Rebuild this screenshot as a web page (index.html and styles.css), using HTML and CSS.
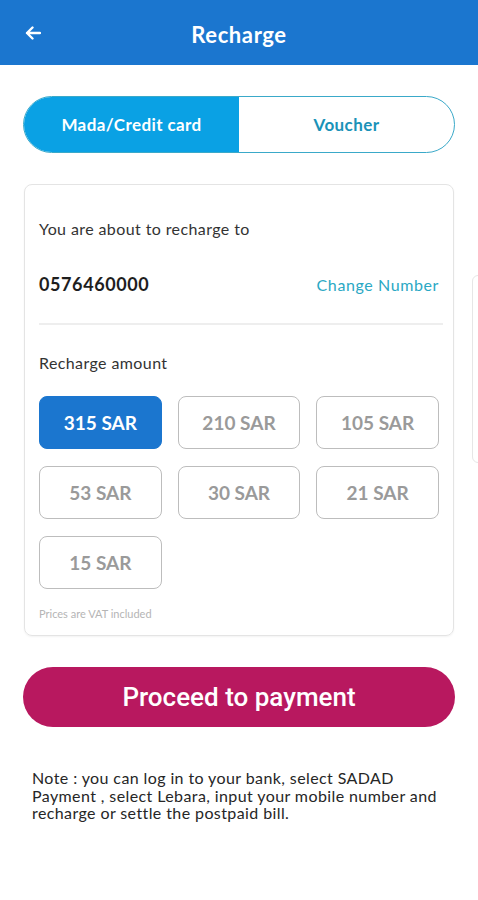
FILE: index.html
```html
<!DOCTYPE html>
<html lang="en">
  <head>
    <meta charset="UTF-8" />
    <meta name="viewport" content="width=device-width, initial-scale=1.0" />
    <title>Recharge</title>
    <link rel="stylesheet" href="styles.css">
  </head>
  <body>
    <header class="topbar">
      <span class="back">
        <svg width="16" height="14" viewBox="0 0 16 14">
          <path d="M15 7H2M7.5 1.5L2 7l5.5 5.5" fill="none" stroke="#fff" stroke-width="2.4" stroke-linecap="round" stroke-linejoin="round" />
        </svg>
      </span>
      <h1 class="title">Recharge</h1>
    </header>

    <main class="content">
      <div class="tabs">
        <div class="tab active">Mada/Credit card</div>
        <div class="tab">Voucher</div>
      </div>

      <div class="card">
        <p class="label">You are about to recharge to</p>
        <div class="number-row">
          <span class="number">0576460000</span>
          <span class="change">Change Number</span>
        </div>
        <div class="divider"></div>
        <p class="label amount-label">Recharge amount</p>
        <div class="amounts">
          <div class="amount selected">315 SAR</div>
          <div class="amount">210 SAR</div>
          <div class="amount">105 SAR</div>
          <div class="amount">53 SAR</div>
          <div class="amount">30 SAR</div>
          <div class="amount">21 SAR</div>
          <div class="amount">15 SAR</div>
        </div>
        <p class="vat">Prices are VAT included</p>
      </div>
      <!-- edge of the next card, cut off by the screen -->
      <div class="peek"></div>

      <button type="button" class="proceed">Proceed to payment</button>

      <p class="note">
        Note : you can log in to your bank, select SADAD Payment , select Lebara, input your mobile number and recharge or settle the postpaid bill.
      </p>
    </main>
  </body>
</html>
```

FILE: styles.css
```css
body {
  margin: 0;
  font-family: Lato, "Open Sans", sans-serif;
  background: #ffffff;
  color: #222222;
}
.topbar {
  height: 65px;
  background-color: #1b76cf;
  display: flex;
  align-items: center;
  justify-content: center;
  position: relative;
}
.back {
  position: absolute;
  left: 25px;
  top: 26px;
  line-height: 0;
}
.title {
  margin: 0;
  color: #ffffff;
  font-size: 22px;
  font-weight: 700;
  letter-spacing: 0.6px;
  padding-top: 4px;
}
.content {
  position: relative;
  padding: 31px 23px 0;
}
.tabs {
  display: flex;
  height: 57px;
  border: 1.5px solid #3aa9c9;
  border-radius: 29px;
  overflow: hidden;
  box-sizing: border-box;
}
.tab {
  flex: 1;
  display: flex;
  align-items: center;
  justify-content: center;
  font-size: 17px;
  font-weight: 700;
  letter-spacing: 0.4px;
  color: #1a92b8;
}
.tab.active {
  background-color: #0aa1e4;
  color: #ffffff;
}
.card {
  margin-top: 31px;
  margin-left: 1px;
  margin-right: 1px;
  border: 1px solid #e4e4e4;
  border-radius: 8px;
  padding: 34px 14px 14px;
  box-shadow: 0 1px 2px rgba(0, 0, 0, 0.05);
}
.label {
  margin: 0;
  font-size: 16px;
  letter-spacing: 0.4px;
  line-height: 20px;
  color: #333333;
}
.number-row {
  margin-top: 35px;
  display: flex;
  justify-content: space-between;
  align-items: center;
  height: 20px;
}
.number {
  font-size: 18px;
  font-weight: 700;
  letter-spacing: 0.6px;
  color: #1e1e1e;
}
.change {
  font-size: 16px;
  letter-spacing: 0.6px;
  color: #2aa8c4;
}
.divider {
  margin-top: 29px;
  margin-right: -4px;
  height: 2px;
  background: #eeeeee;
}
.amount-label {
  margin-top: 28px;
}
.amounts {
  margin-top: 23px;
  display: grid;
  grid-template-columns: repeat(3, 1fr);
  column-gap: 16px;
  row-gap: 17px;
}
.amount {
  height: 53px;
  box-sizing: border-box;
  border: 1.5px solid #bdbdbd;
  border-radius: 8px;
  display: flex;
  align-items: center;
  justify-content: center;
  font-size: 19px;
  font-weight: 700;
  color: #9a9a9a;
}
.amount.selected {
  background-color: #1b76cf;
  border-color: #1b76cf;
  color: #ffffff;
}
.vat {
  margin: 18px 0 0;
  font-size: 11px;
  line-height: 14px;
  color: #b5b5b5;
}
.peek {
  position: absolute;
  right: -6px;
  top: 210px;
  width: 10px;
  height: 186px;
  border: 1px solid #e6e6e6;
  border-radius: 6px;
}
.proceed {
  margin-top: 31px;
  width: 100%;
  height: 60px;
  border: none;
  border-radius: 30px;
  background-color: #b8185f;
  color: #ffffff;
  font-family: Roboto, sans-serif;
  font-size: 26px;
  font-weight: 500;
  cursor: pointer;
}
.note {
  margin: 42px 2px 0 9px;
  font-size: 16px;
  letter-spacing: 0.4px;
  line-height: 17.5px;
  color: #262626;
}
```
